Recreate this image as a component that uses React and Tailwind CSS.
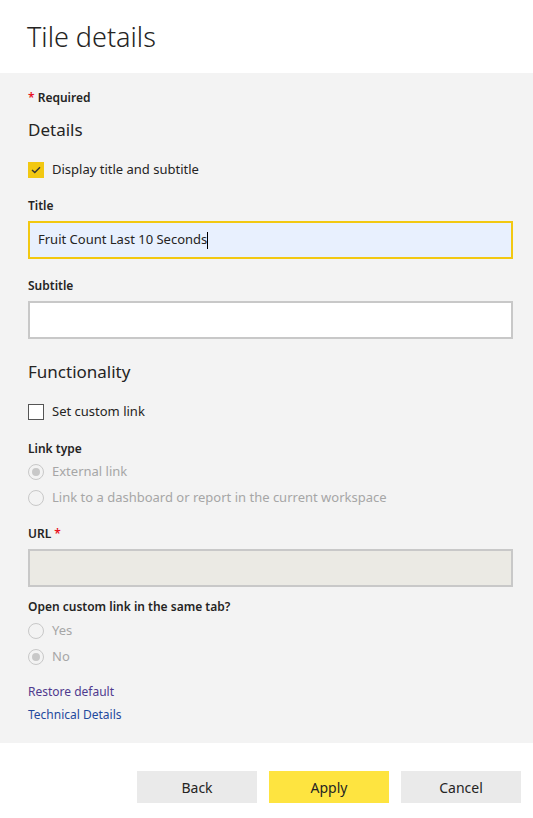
import React from "react";

const font = { fontFamily: '"Noto Sans", "Open Sans", sans-serif' };

function Radio({ checked, label }) {
  return (
    <div className="flex items-center h-[26px]">
      <span className="w-[16px] h-[16px] rounded-full border border-[#c8c8c8] flex items-center justify-center">
        {checked && <span className="w-[8px] h-[8px] rounded-full bg-[#c8c8c8]" />}
      </span>
      <span className="ml-[8px] text-[13px] text-[#a6a6a6]">{label}</span>
    </div>
  );
}

function Label({ children }) {
  return <div className="text-[12px] font-semibold text-[#252423] leading-[16px]">{children}</div>;
}

export default function App() {
  return (
    <div className="w-[533px] h-[818px] bg-white text-[#252423]" style={font}>
      <div className="h-[73px] px-[27px] flex items-center">
        <h1 className="text-[27px] font-light text-[#252423] leading-none mt-[-1px]">Tile details</h1>
      </div>
      <div className="bg-[#f3f3f3] h-[670px] pl-[28px] pr-[20px] pt-[16px]">
        <div className="text-[12px] font-semibold leading-[18px]">
          <span className="text-[#e81123]">* </span>Required
        </div>
        <div className="text-[17px] mt-[11px] leading-[24px]">Details</div>
        <div className="flex items-center mt-[19px] h-[18px]">
          <span className="w-[16px] h-[16px] bg-[#f2c811] flex items-center justify-center">
            <svg width="10" height="8" viewBox="0 0 10 8">
              <path d="M1 4 L3.8 6.6 L9 1.2" fill="none" stroke="#333" strokeWidth="1.4" />
            </svg>
          </span>
          <span className="ml-[8px] text-[13px]">Display title and subtitle</span>
        </div>
        <div className="mt-[19px]"><Label>Title</Label></div>
        <div className="mt-[7px] h-[38px] border-2 border-[#f2c811] bg-[#e8f0fe] flex items-center px-[8px]">
          <span className="text-[13px]">Fruit Count Last 10 Seconds</span>
          <span className="w-[1px] h-[17px] bg-black" />
        </div>
        <div className="mt-[19px]"><Label>Subtitle</Label></div>
        <div className="mt-[7px] h-[38px] border-2 border-[#c8c8c8] bg-white" />
        <div className="text-[17px] mt-[21px] leading-[24px]">Functionality</div>
        <div className="flex items-center mt-[19px] h-[18px]">
          <span className="w-[16px] h-[16px] border border-[#555] bg-white" />
          <span className="ml-[8px] text-[13px]">Set custom link</span>
        </div>
        <div className="mt-[20px]"><Label>Link type</Label></div>
        <div className="mt-[2px]">
          <Radio checked label="External link" />
          <Radio label="Link to a dashboard or report in the current workspace" />
        </div>
        <div className="mt-[15px]">
          <Label>URL <span className="text-[#e81123]">*</span></Label>
        </div>
        <div className="mt-[7px] h-[38px] border-2 border-[#c8c8c8] bg-[#ebeae4]" />
        <div className="mt-[12px]"><Label>Open custom link in the same tab?</Label></div>
        <div className="mt-[3px]">
          <Radio label="Yes" />
          <Radio checked label="No" />
        </div>
        <div className="mt-[10px] text-[12px] leading-[23px]">
          <div className="text-[#4f3a8e]">Restore default</div>
          <div className="text-[#1f4a9e]">Technical Details</div>
        </div>
      </div>
      <div className="flex justify-end gap-[12px] pr-[12px] pt-[28px]">
        <button className="w-[120px] h-[32px] bg-[#eaeaea] text-[14px] text-[#252423]">Back</button>
        <button className="w-[120px] h-[32px] bg-[#fee440] text-[14px] text-[#252423]">Apply</button>
        <button className="w-[120px] h-[32px] bg-[#eaeaea] text-[14px] text-[#252423]">Cancel</button>
      </div>
    </div>
  );
}
